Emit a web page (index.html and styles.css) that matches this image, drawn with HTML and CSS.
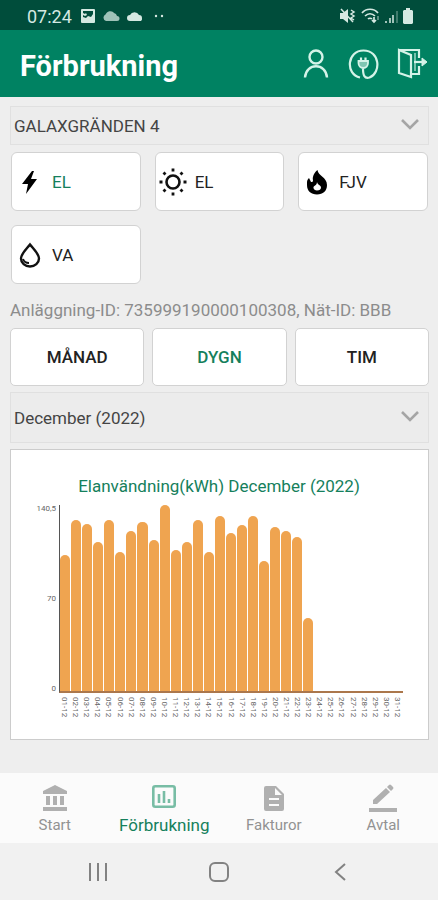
FILE: index.html
```html
<!DOCTYPE html>
<html lang="sv">
<head>
  <meta charset="utf-8">
  <meta name="viewport" content="width=device-width, initial-scale=1">
  <title>Förbrukning</title>
  <link rel="stylesheet" href="styles.css">
</head>
<body>
  <div class="status">
    <time class="status-time">07:24</time>
    <svg width="16" height="16" viewBox="0 0 16 16"><path fill="currentColor" fill-rule="evenodd" d="M2 1h12a1 1 0 0 1 1 1v12a1 1 0 0 1-1 1H2a1 1 0 0 1-1-1V2a1 1 0 0 1 1-1zM3 3v6l3 1 2-2 3 1 2-3V3zM3 5l2 1 1-1 1 2-2 1-2-1z"/></svg>
    <svg class="dim" width="18" height="12" viewBox="0 0 18 12"><path fill="currentColor" d="M4 11a3.500 3.500 0 0 1-.5-6.500A5 5 0 0 1 12 3a4 4 0 0 1 3 3 2.500 2.500 0 0 1 0 5z"/></svg>
    <svg width="18" height="12" viewBox="0 0 18 12"><path fill="currentColor" d="M4 11a3 3 0 0 1 0-6 5 5 0 0 1 9 0 3 3 0 0 1 3 3 3 3 0 0 1-1 3z"/></svg>
    <svg class="status-dots" width="10" height="4" viewBox="0 0 10 4"><circle cx="2" cy="2" r="1.200" fill="currentColor"/><circle cx="8" cy="2" r="1.200" fill="currentColor"/></svg>
    <span class="status-right">
      <svg width="18" height="16" viewBox="0 0 18 16"><path fill="currentColor" d="M1 5h3l5-4v14l-5-4H1z"/><path d="M2 1l12 13M12 2l3 2-3 2 3 2-3 2 3 2" fill="none" stroke="currentColor" stroke-width="1.500"/></svg>
      <svg width="19" height="16" viewBox="0 0 19 16" fill="none" stroke="currentColor" stroke-width="1.700"><path d="M1 5c4-5 12-5 16 0M4 8c3-3 7-3 10 0M7 11c1-1 3-1 4 0M13 9v5M11 12l2 2 2-2"/><path d="M17 12V8" opacity=".5"/></svg>
      <svg width="14" height="16" viewBox="0 0 14 16" fill="none" stroke="currentColor" stroke-width="1.500"><path d="M2 15v-2M6 15v-5M9 15V7"/><path d="M13 15V3" opacity=".4"/></svg>
      <svg width="12" height="16" viewBox="0 0 12 16"><path fill="currentColor" d="M4 0h4v2h2l1 1v12l-1 1H2l-1-1V3l1-1h2z"/></svg>
    </span>
  </div>

  <header class="header">
    <h1>Förbrukning</h1>
    <div class="header-actions">
      <button type="button" aria-label="Profil">
        <svg width="30" height="32" viewBox="0 0 30 32" fill="none" stroke="currentColor" stroke-width="2.400"><circle cx="16" cy="9" r="6.500"/><path d="M5 29.500c1-15 21-15 22 0"/></svg>
      </button>
      <button type="button" aria-label="Laddning">
        <svg width="32" height="32" viewBox="0 0 32 32" fill="none" stroke="currentColor" stroke-width="2.200"><path d="M13 29.500C-2 26 0 2.500 16.500 2.500s18 22 6 27c-5 1.500-6.500-2-6.500-9"/><path d="M11.500 13h9.500v2c0 3-2 5-4.700 5s-4.800-2-4.800-5z" fill="currentColor" fill-opacity=".6" stroke-width="1.800"/><path d="M14 9.500V13M18.500 9.500V13"/></svg>
      </button>
      <button type="button" aria-label="Logga ut">
        <svg width="32" height="32" viewBox="0 0 32 32" fill="none" stroke="currentColor" stroke-width="2.200"><path d="M3 2h20v8M23 18v8h-8M3 2v23l12 4V7L3 2z"/><path d="M19 5v18" stroke-width="1.600" opacity=".7"/><path d="M18 14h9"/><path d="M26 10l5 4-5 4z" fill="currentColor" stroke-width="1"/></svg>
      </button>
    </div>
  </header>

  <main class="main">
    <div class="picker">
      <select aria-label="Adress"><option>GALAXGRÄNDEN 4</option></select>
      <svg class="chevron" width="20" height="12" viewBox="0 0 20 12"><path d="M2 2l8 8 8-8" fill="none" stroke="currentColor" stroke-width="2.600"/></svg>
    </div>

    <div class="services">
      <button type="button" class="service active">
        <svg width="26" height="30" viewBox="0 0 26 30"><path fill="#000" d="M15 4L5 17h6L9 27 20 12h-6l3-8z"/></svg>EL
      </button>
      <button type="button" class="service sun">
        <svg width="30" height="30" viewBox="0 0 30 30"><circle cx="15" cy="15" r="6.500" fill="none" stroke="#111" stroke-width="2.600"/><path d="M15 1.500v3M15 25.500v3M1.500 15h3M25.500 15h3M5.500 5.500l2 2M22.500 22.500l2 2M5.500 24.500l2-2M22.500 7.500l2-2" stroke="#111" stroke-width="2.800"/></svg>EL
      </button>
      <button type="button" class="service">
        <svg width="26" height="30" viewBox="0 0 26 30"><path fill="#000" fill-rule="evenodd" d="M13.500 3c.5 6 9.500 7 9.500 15 0 6-4 9.500-10 9.500S3 24 3 18c0-4 0-5 2-7l2 4c1.500 0 2-.5 2-1.500C8 9 11 5 13.500 3zM13 15c0 4-4 3.500-3.500 6 .3 1.500 1.500 2.500 3.500 2.500 2.500 0 4-1 4-3 0-2.500-3.500-2.500-4-5.500z"/></svg>FJV
      </button>
      <button type="button" class="service">
        <svg width="26" height="30" viewBox="0 0 26 30" fill="none" stroke="#111"><path d="M13 4.500C9 9.500 4 14 4 18.500a9 8 0 0 0 18 0C22 14 17 9.500 13 4.500z" stroke-width="2.400"/><path d="M6 19c1 3 3 4 6 4" stroke-width="2"/></svg>VA
      </button>
    </div>

    <p class="ids">Anläggning-ID: 735999190000100308, Nät-ID: BBB</p>

    <div class="periods">
      <button type="button">MÅNAD</button>
      <button type="button" class="active">DYGN</button>
      <button type="button">TIM</button>
    </div>

    <div class="picker tall">
      <select aria-label="Månad"><option>December (2022)</option></select>
      <svg class="chevron" width="20" height="12" viewBox="0 0 20 12"><path d="M2 2l8 8 8-8" fill="none" stroke="currentColor" stroke-width="2.600"/></svg>
    </div>

    <section class="card">
      <h2>Elanvändning(kWh) December (2022)</h2>
      <div class="chart">
        <div class="y-axis"><span>140,5</span><span>70</span><span>0</span></div>
        <div class="bars" id="bars"></div>
        <div class="dates" id="dates"></div>
      </div>
    </section>
  </main>

  <nav class="tabs">
    <a href="#start">
      <svg width="26" height="28" viewBox="0 0 26 28" fill="currentColor"><path d="M13 1l12 6v3H1V7zM4 12h4v9H4zM11 12h4v9h-4zM18 12h4v9h-4zM1 23h24v4H1z"/></svg>
      <span>Start</span>
    </a>
    <a href="#forbrukning" class="active" aria-current="page">
      <svg width="26" height="28" viewBox="0 0 26 28" fill="none" stroke="currentColor" stroke-width="2.600"><rect x="2.300" y="2.300" width="21.400" height="20.400" rx="2"/><path d="M8 10v9M13 7v12M18 15v4"/></svg>
      <span>Förbrukning</span>
    </a>
    <a href="#fakturor">
      <svg width="26" height="28" viewBox="0 0 26 28"><path fill="currentColor" fill-rule="evenodd" d="M5 2h10l8 8v15a2 2 0 0 1-2 2H5a2 2 0 0 1-2-2V4a2 2 0 0 1 2-2zM14 4v7h7zM8 14v2h10v-2zM8 20v2h10v-2z"/></svg>
      <span>Fakturor</span>
    </a>
    <a href="#avtal">
      <svg width="30" height="28" viewBox="0 0 30 28" fill="currentColor"><path d="M1 24h28v4H1zM5 20v-4L18 4l4 4L9 20zM19 3l2-2q1-1 2 0l2 2q1 1 0 2l-2 2z"/></svg>
      <span>Avtal</span>
    </a>
  </nav>

  <div class="system">
    <button type="button" aria-label="Senaste appar"><svg width="20" height="20" viewBox="0 0 20 20"><path d="M2 1v18M10 1v18M18 1v18" stroke="currentColor" stroke-width="2"/></svg></button>
    <button type="button" aria-label="Hem"><svg width="20" height="20" viewBox="0 0 20 20"><rect x="1" y="1" width="18" height="18" rx="5" fill="none" stroke="currentColor" stroke-width="2"/></svg></button>
    <button type="button" aria-label="Tillbaka"><svg width="20" height="20" viewBox="0 0 20 20"><path d="M15 2l-9 8 9 8" fill="none" stroke="currentColor" stroke-width="2"/></svg></button>
  </div>
  <script src="script.js"></script>
</body>
</html>
```
FILE: styles.css
```css
* { box-sizing: border-box; }

body {
  margin: 0;
  min-height: 100vh;
  display: flex;
  flex-direction: column;
  background: #eee;
  color: #222;
  font-family: Roboto, "Liberation Sans", sans-serif;
  font-size: 17px;
}

button, select { font: inherit; color: inherit; }
button { padding: 0; border: 0; background: none; }
svg { display: block; flex: none; }

.status {
  display: flex;
  align-items: center;
  gap: 6px;
  height: 30px;
  padding: 2px 24px 0 27px;
  background: #004d3b;
  color: #d5e9e2;
}
.status-time { font-size: 18px; margin-right: 2px; }
.dim { opacity: .75; }
.status-dots { margin-left: 4px; }
.status-right { display: flex; align-items: center; gap: 4px; margin-left: auto; }

.header {
  display: flex;
  align-items: center;
  justify-content: space-between;
  height: 67px;
  padding: 0 10px 0 20px;
  background: #008262;
  color: #fff;
}
.header h1 { margin: 0; padding-top: 4px; font-size: 29px; line-height: 36px; }
.header-actions { display: flex; gap: 17px; color: #d4f3e8; }

.main { flex: 1; padding: 9px 9px 31px 10px; }

.picker { display: grid; height: 39px; align-items: center; }
.picker > * { grid-area: 1 / 1; }
.picker select {
  width: 100%;
  height: 100%;
  padding: 0 3px;
  appearance: none;
  border: 1px solid #e0e0e0;
  border-radius: 0;
  background: #ececec;
  color: #444;
}
.picker .chevron { justify-self: end; margin: 0 9px 4px 0; color: #a5a5a5; pointer-events: none; }
.picker.tall { height: 51px; margin: 6px 0; }

.services {
  display: grid;
  grid-template-columns: repeat(3, 1fr);
  gap: 14px;
  margin: 7px 1px 16px;
}
.service {
  display: flex;
  align-items: center;
  gap: 9px;
  height: 59px;
  padding-left: 5px;
  border: 1px solid #d2d2d2;
  border-radius: 6px;
  background: #fff;
}
.service.sun { gap: 7px; padding-left: 2px; }
.service.active { color: #15805c; }

.ids { margin: 0 0 8px; color: #8c8c8c; line-height: 20px; white-space: nowrap; }

.periods { display: grid; grid-template-columns: repeat(3, 1fr); gap: 8px; }
.periods button {
  height: 58px;
  border: 1px solid #d2d2d2;
  border-radius: 5px;
  background: #fff;
  font-weight: 500;
}
.periods .active { color: #15805c; }

.card { padding: 25px 25px 22px 24px; border: 1px solid #ccc; background: #fff; }
.card h2 {
  margin: 0;
  color: #15805c;
  font-size: 17px;
  font-weight: 400;
  line-height: 22px;
  text-align: center;
}

.chart {
  display: grid;
  grid-template: 188px auto / 24px 1fr;
  margin-top: 8px;
  color: #666;
  font-size: 8px;
}
.y-axis {
  display: flex;
  flex-direction: column;
  justify-content: space-between;
  padding-right: 3px;
  line-height: 8px;
  text-align: right;
}
.bars {
  display: flex;
  align-items: flex-end;
  border-left: 1px solid #555;
  border-bottom: 2px solid #ab774c;
}
.bar { flex: 1; margin-right: 1px; border-radius: 5px 5px 0 0; background: #efa450; }
.dates { grid-column: 2; display: flex; padding-top: 4px; }
.dates span { flex: 1; writing-mode: vertical-rl; line-height: 11px; }

.tabs { display: grid; grid-template-columns: repeat(4, 1fr); height: 70px; background: #fbfbfb; }
.tabs a {
  display: flex;
  flex-direction: column;
  align-items: center;
  gap: 4px;
  padding-top: 11px;
  color: #b0b0b0;
  font-size: 15px;
  line-height: 18px;
  text-decoration: none;
}
.tabs span { color: #929292; }
.tabs .active { color: #78bda5; font-size: 17px; }
.tabs .active span { color: #15805c; }

.system {
  display: flex;
  align-items: center;
  justify-content: space-between;
  height: 57px;
  padding: 0 20%;
  background: #f1f1f1;
  color: #828282;
}
```
FILE: script.js
```js
// Share of the chart's maximum (140,5 kWh) used on each day of December, in percent.
const days = [
  73, 92, 90, 80, 92, 75, 86, 91, 81, 100, 76, 80, 92, 75, 94, 85,
  89, 94, 70, 88, 86, 83, 39, 0, 0, 0, 0, 0, 0, 0, 0
];
const bars = document.getElementById('bars');
const dates = document.getElementById('dates');
days.forEach((value, i) => {
  const bar = document.createElement('div');
  bar.className = 'bar';
  bar.style.height = value + '%';
  bars.append(bar);
  const label = document.createElement('span');
  label.textContent = String(i + 1).padStart(2, '0') + '-12';
  dates.append(label);
});
```
